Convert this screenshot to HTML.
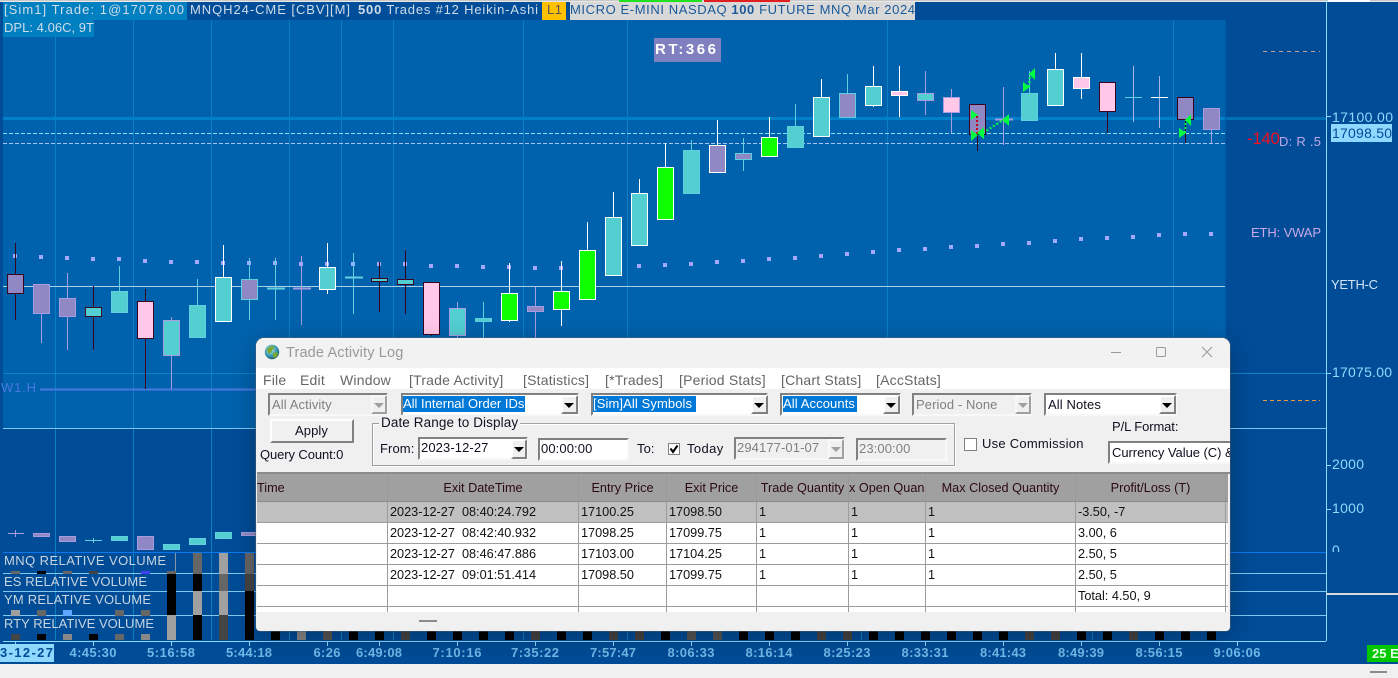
<!DOCTYPE html>
<html><head><meta charset="utf-8"><title>Trade Activity Log</title>
<style>
html,body{margin:0;padding:0;width:1398px;height:678px;overflow:hidden;background:#f0f0f0}
body{position:relative;font-family:"Liberation Sans",sans-serif}
#c{position:absolute;left:0;top:0}
#c text{font-family:"Liberation Sans",sans-serif;font-size:13px}
.pd{fill:#9088c4;stroke:#3a0020}.pp{fill:#9088c4;stroke:#a89ce0}.pt{fill:#9088c4;stroke:#60d0e0}.pw{fill:#9088c4;stroke:#fff}
.td{fill:#53cfd2;stroke:#3a0020}.tt{fill:#53cfd2;stroke:#60d0e0}.tp{fill:#53cfd2;stroke:#a89ce0}.tw{fill:#53cfd2;stroke:#fff}
.kd{fill:#ffc8e8;stroke:#3a0020}.kp{fill:#ffc8e8;stroke:#a89ce0}.kw{fill:#ffc8e8;stroke:#fff}
.gw{fill:#10ff00;stroke:#fff}
.ax{fill:#8fd8ff}.xl{fill:#70b8e8;font-weight:bold;text-anchor:middle}
.rl{fill:#c8d4e0}
#wo{position:absolute;left:256px;top:338px;width:974px;height:293px;border-radius:8px 8px 4px 4px;overflow:hidden;background:#f0f0f0;box-shadow:0 6px 26px rgba(0,0,0,.28),0 0 0 1px rgba(90,110,130,.5)}
#w{position:absolute;left:-256px;top:-338px;width:1398px;height:678px}
#w div,#w span{position:absolute;box-sizing:border-box}
.t{white-space:pre;line-height:16px;height:16px;font-size:14px;color:#101020}
.m{color:#666;top:372px;font-size:14px;letter-spacing:.2px}
.cb{height:23px;top:393px;background:#fff;border:2px solid;border-color:#808080 #f8f8f8 #f8f8f8 #808080}
.cb.d{background:#f0f0f0}
.btn{background:#f0f0f0;border:2px solid;border-color:#fff #808080 #808080 #fff}
.ar{width:0;height:0;border-left:5px solid transparent;border-right:5px solid transparent;border-top:5px solid #000}
.ar.g{border-top-color:#a0a0a0}
.sel{background:#0078d7;color:#fff}
.tb{font-size:13px;letter-spacing:.1px}
table{border-collapse:collapse;table-layout:fixed;font-size:12.7px;color:#111;background:#fff}
td{border:1px solid #9c9c9c;padding:0 0 0 2px;height:20px;line-height:20px;white-space:pre;overflow:hidden}
tr.h td{background:#a0a0a0;height:26px;line-height:26px;text-align:center;color:#2a0a10;border-color:#a0a0a0 #9a9a9a #8c8c8c #9a9a9a;padding:0}
tr.s td{background:#c0c0c0}
</style></head><body>
<svg id="c" width="1398" height="678" viewBox="0 0 1398 678" xmlns="http://www.w3.org/2000/svg" shape-rendering="crispEdges">
<rect width="1398" height="678" fill="#f0f0f0"/>
<rect y="2" width="1398" height="662" fill="#004c97"/>
<rect x="3" y="20" width="1222" height="408" fill="#0062ad"/>
<rect x="0" y="0" width="1398" height="1" fill="#c8c8c8"/>
<rect x="0" y="1" width="1398" height="1" fill="#e8e8e8"/>
<rect x="619" y="0" width="83" height="2" fill="#20e020"/><rect x="704" y="0" width="86" height="2" fill="#e02020"/>
<rect x="1328" y="0" width="42" height="2" fill="#fff"/>
<!-- vertical grid -->
<g stroke="#0a7fc4" fill="none"><path d="M55.5 37V640M133.5 20V640M211.5 20V640M289.5 20V640M341.5 20V640M393.5 20V640M523.5 20V640M627.5 20V640M887.5 20V428M1173.5 20V428M861.5 630V640M1092.5 630V640"/></g>
<path d="M1326.5 0V641" stroke="#8fd8ff"/>
<!-- horizontals -->
<rect x="3" y="117" width="1222" height="3" fill="#0080c8"/><rect x="1225" y="117" width="101" height="3" fill="#0070b4"/>
<path d="M3 133.5H1225" stroke="#8fd8ff" stroke-dasharray="4 2"/>
<path d="M3 143.5H1225" stroke="#a8c4f4" stroke-dasharray="4 2"/>
<path d="M3 286.5H1225" stroke="#a8d0e4"/>
<path d="M3 373.5H1326" stroke="#0a84c8"/>
<path d="M3 428.5H1326" stroke="#80c8f0"/>
<path d="M40 389.5H300" stroke="#4a78e0" stroke-width="2"/>
<path d="M1263 51.5H1320" stroke="#c0a090" stroke-dasharray="4 4"/>
<path d="M1263 400.5H1320" stroke="#e89a40" stroke-dasharray="4 3"/>
<!-- dots -->
<g fill="#a4a8ff"><rect x="13" y="254" width="4" height="4"/><rect x="39" y="255" width="4" height="4"/><rect x="65" y="256" width="4" height="4"/><rect x="91" y="257" width="4" height="4"/><rect x="117" y="257" width="4" height="4"/><rect x="143" y="259" width="4" height="4"/><rect x="169" y="260" width="4" height="4"/><rect x="195" y="260" width="4" height="4"/><rect x="221" y="261" width="4" height="4"/><rect x="247" y="261" width="4" height="4"/><rect x="273" y="261" width="4" height="4"/><rect x="299" y="262" width="4" height="4"/><rect x="325" y="262" width="4" height="4"/><rect x="351" y="262" width="4" height="4"/><rect x="377" y="262" width="4" height="4"/><rect x="403" y="262" width="4" height="4"/><rect x="429" y="264" width="4" height="4"/><rect x="455" y="264" width="4" height="4"/><rect x="481" y="265" width="4" height="4"/><rect x="507" y="265" width="4" height="4"/><rect x="533" y="266" width="4" height="4"/><rect x="559" y="266" width="4" height="4"/><rect x="637" y="264" width="4" height="4"/><rect x="663" y="263" width="4" height="4"/><rect x="689" y="262" width="4" height="4"/><rect x="715" y="260" width="4" height="4"/><rect x="741" y="259" width="4" height="4"/><rect x="767" y="257" width="4" height="4"/><rect x="793" y="256" width="4" height="4"/><rect x="819" y="254" width="4" height="4"/><rect x="845" y="252" width="4" height="4"/><rect x="871" y="250" width="4" height="4"/><rect x="897" y="248" width="4" height="4"/><rect x="923" y="247" width="4" height="4"/><rect x="949" y="245" width="4" height="4"/><rect x="975" y="244" width="4" height="4"/><rect x="1001" y="242" width="4" height="4"/><rect x="1027" y="241" width="4" height="4"/><rect x="1053" y="239" width="4" height="4"/><rect x="1079" y="237" width="4" height="4"/><rect x="1105" y="236" width="4" height="4"/><rect x="1131" y="235" width="4" height="4"/><rect x="1157" y="233" width="4" height="4"/><rect x="1183" y="232" width="4" height="4"/><rect x="1209" y="232" width="4" height="4"/></g>
<!-- candles -->
<g class="pd"><path d="M15.5 243V320"/><rect x="7.5" y="274.5" width="16" height="19"/></g>
<g class="pp"><path d="M41.5 314V343"/><rect x="33.5" y="284.5" width="16" height="29"/></g>
<g class="pp"><path d="M67.5 273V350"/><rect x="59.5" y="298.5" width="16" height="18"/></g>
<g class="td"><path d="M93.5 286V350"/><rect x="85.5" y="307.5" width="16" height="9"/></g>
<g class="tt"><path d="M119.5 266V313"/><rect x="111.5" y="291.5" width="16" height="21"/></g>
<g class="kd"><path d="M145.5 289V389"/><rect x="137.5" y="301.5" width="16" height="37"/></g>
<g class="tp"><path d="M171.5 317V389"/><rect x="163.5" y="320.5" width="16" height="35"/></g>
<g class="tt"><path d="M197.5 279V338"/><rect x="189.5" y="305.5" width="16" height="32"/></g>
<g class="tw"><path d="M223.5 245V322"/><rect x="215.5" y="277.5" width="16" height="44"/></g>
<g class="pt"><path d="M249.5 258V320"/><rect x="241.5" y="279.5" width="16" height="20"/></g>
<g class="tt"><path d="M275.5 258V320"/><rect x="267.5" y="288" width="17" height="1"/></g>
<g class="pp"><path d="M301.5 256V325"/><rect x="293.5" y="288" width="17" height="1"/></g>
<g class="tw"><path d="M327.5 243V294"/><rect x="319.5" y="267.5" width="16" height="22"/></g>
<g class="tt"><path d="M353.5 253V314"/><rect x="345.5" y="277" width="17" height="1"/></g>
<g class="td"><path d="M379.5 262V312"/><rect x="371.5" y="278.5" width="16" height="3"/></g>
<g class="td"><path d="M405.5 250V314"/><rect x="397.5" y="279.5" width="16" height="5"/></g>
<g class="kd"><path d="M431.5 282V336"/><rect x="423.5" y="282.5" width="16" height="52"/></g>
<g class="tp"><path d="M457.5 302V340"/><rect x="449.5" y="308.5" width="16" height="27"/></g>
<g class="tt"><path d="M483.5 302V340"/><rect x="475.5" y="318.5" width="16" height="3"/></g>
<g class="gw"><path d="M509.5 263V322"/><rect x="501.5" y="293.5" width="16" height="27"/></g>
<g class="pp"><path d="M535.5 287V340"/><rect x="527.5" y="306.5" width="16" height="5"/></g>
<g class="gw"><path d="M561.5 261V326"/><rect x="553.5" y="291.5" width="16" height="18"/></g>
<g class="gw"><path d="M587.5 222V299"/><rect x="579.5" y="250.5" width="16" height="49"/></g>
<g class="tw"><path d="M613.5 192V276"/><rect x="605.5" y="217.5" width="16" height="58"/></g>
<g class="tw"><path d="M639.5 179V245"/><rect x="631.5" y="193.5" width="16" height="52"/></g>
<g class="gw"><path d="M665.5 143V219"/><rect x="657.5" y="167.5" width="16" height="52"/></g>
<g class="tt"><path d="M691.5 140V193"/><rect x="683.5" y="150.5" width="16" height="43"/></g>
<g class="pw"><path d="M717.5 120V172"/><rect x="709.5" y="145.5" width="16" height="27"/></g>
<g class="pt"><path d="M743.5 138V171"/><rect x="735.5" y="153.5" width="16" height="6"/></g>
<g class="gw"><path d="M769.5 117V156"/><rect x="761.5" y="137.5" width="16" height="19"/></g>
<g class="tt"><path d="M795.5 104V147"/><rect x="787.5" y="126.5" width="16" height="21"/></g>
<g class="tw"><path d="M821.5 79V136"/><rect x="813.5" y="97.5" width="16" height="39"/></g>
<g class="pt"><path d="M847.5 74V118"/><rect x="839.5" y="93.5" width="16" height="24"/></g>
<g class="tw"><path d="M873.5 66V107"/><rect x="865.5" y="86.5" width="16" height="19"/></g>
<g class="kw"><path d="M899.5 66V117"/><rect x="891.5" y="91.5" width="16" height="4"/></g>
<g class="tp"><path d="M925.5 71V115"/><rect x="917.5" y="93.5" width="16" height="7"/></g>
<g class="kp"><path d="M951.5 89V133"/><rect x="943.5" y="97.5" width="16" height="15"/></g>
<g class="pd"><path d="M977.5 104V151"/><rect x="969.5" y="104.5" width="16" height="30"/></g>
<g class="pp"><path d="M1003.5 87V145"/><rect x="995.5" y="119" width="17" height="1"/></g>
<g class="tt"><path d="M1029.5 71V93"/><rect x="1021.5" y="93.5" width="16" height="27"/></g>
<g class="tw"><path d="M1055.5 53V106"/><rect x="1047.5" y="69.5" width="16" height="36"/></g>
<g class="kw"><path d="M1081.5 53V99"/><rect x="1073.5" y="77.5" width="16" height="11"/></g>
<g class="kd"><path d="M1107.5 82V133"/><rect x="1099.5" y="82.5" width="16" height="29"/></g>
<path d="M1133.5 66V122" stroke="#a8b4e8"/><rect x="1125" y="97" width="17" height="1" fill="#60d0e0"/>
<path d="M1159.5 76V128" stroke="#a8b4e8"/><rect x="1151" y="97" width="17" height="1" fill="#fff"/>
<g class="pd"><path d="M1185.5 97V143"/><rect x="1177.5" y="97.5" width="16" height="22"/></g>
<g class="pp"><path d="M1211.5 108V143"/><rect x="1203.5" y="108.5" width="16" height="21"/></g>
<!-- trades -->
<path d="M977 116V135" stroke="#c00010" stroke-width="2" stroke-dasharray="2 2"/>
<g stroke="#00ff40" stroke-width="2" stroke-dasharray="2 2" fill="none"><path d="M983 133L1003 120"/><path d="M1029 87L1030 75"/><path d="M1185 133L1186 120"/></g>
<g fill="#00ff40" shape-rendering="auto"><path d="M971 110L978 115L971 120Z"/><path d="M971 130L978 135L971 141Z"/><path d="M984 127L977 133L984 139Z"/><path d="M1009 114L1002 120L1009 126Z"/><path d="M1023 82L1030 87L1023 92Z"/><path d="M1035 68L1029 74L1035 80Z"/><path d="M1179 128L1186 133L1179 138Z"/><path d="M1191 114L1185 120L1191 126Z"/></g>
<!-- volume pane -->
<g fill="#9088c4" stroke="#a89ce0"><path d="M15.5 530V537M8 533.5H24" fill="none"/><rect x="33.5" y="533.5" width="16" height="3"/><rect x="59.5" y="536.5" width="16" height="5"/><rect x="137.5" y="536.5" width="16" height="13"/><rect x="241.5" y="532.5" width="16" height="3"/></g>
<g fill="#53cfd2" stroke="#60d0e0"><path d="M93.5 538V543M85 540.5H102" fill="none"/><rect x="111.5" y="536.5" width="16" height="4"/><rect x="163.5" y="544.5" width="16" height="5"/><rect x="189.5" y="538.5" width="16" height="6"/><rect x="215.5" y="532.5" width="16" height="6"/></g>
<path d="M0 552.5H1326" stroke="#0a78f0"/>
<path d="M0 573.5H1326M0 591.5H1326M0 615.5H1326" stroke="#80c8f0"/>
<path d="M175.5 553V573" stroke="#8a96a8"/>
<!-- rel bars -->
<g fill="#666"><rect x="11" y="571" width="9" height="3"/><rect x="63" y="571" width="9" height="3"/><rect x="167" y="571" width="9" height="3"/><rect x="193" y="553" width="9" height="21"/><rect x="245" y="553" width="9" height="21"/><rect x="219" y="574" width="9" height="17"/><rect x="37" y="610" width="9" height="6"/><rect x="115" y="610" width="9" height="6"/><rect x="141" y="610" width="9" height="6"/><rect x="115" y="634" width="9" height="6"/></g>
<g fill="#444"><rect x="89" y="571" width="9" height="3"/><rect x="245" y="574" width="9" height="17"/><rect x="219" y="615" width="9" height="25"/><rect x="11" y="634" width="9" height="6"/></g>
<g fill="#000"><rect x="37" y="571" width="9" height="3"/><rect x="167" y="574" width="9" height="41"/><rect x="193" y="574" width="9" height="17"/><rect x="245" y="591" width="9" height="49"/><rect x="193" y="615" width="9" height="25"/><rect x="37" y="634" width="9" height="6"/><rect x="89" y="634" width="9" height="6"/></g>
<g fill="#a0a0a0"><rect x="219" y="553" width="9" height="21"/><rect x="193" y="591" width="9" height="24"/><rect x="219" y="591" width="9" height="24"/><rect x="167" y="615" width="9" height="25"/><rect x="11" y="610" width="9" height="6"/></g>
<rect x="141" y="571" width="9" height="3" fill="#4040f0"/><rect x="63" y="610" width="9" height="6" fill="#60a8ff"/>
<g fill="#888"><rect x="63" y="634" width="9" height="6"/><rect x="141" y="634" width="9" height="6"/></g>
<!-- strip under window -->
<g fill="#000"><rect x="271" y="631" width="9" height="9"/><rect x="349" y="631" width="9" height="9"/><rect x="375" y="631" width="9" height="9"/><rect x="427" y="631" width="9" height="9"/><rect x="453" y="631" width="9" height="9"/><rect x="479" y="631" width="9" height="9"/><rect x="505" y="631" width="9" height="9"/><rect x="557" y="631" width="9" height="9"/><rect x="583" y="631" width="9" height="9"/><rect x="661" y="631" width="9" height="9"/><rect x="739" y="631" width="9" height="9"/><rect x="765" y="631" width="9" height="9"/><rect x="791" y="631" width="9" height="9"/><rect x="869" y="631" width="9" height="9"/><rect x="895" y="631" width="9" height="9"/><rect x="921" y="631" width="9" height="9"/><rect x="947" y="631" width="9" height="9"/><rect x="973" y="631" width="9" height="9"/><rect x="999" y="631" width="9" height="9"/><rect x="1077" y="631" width="9" height="9"/><rect x="1103" y="631" width="9" height="9"/><rect x="1155" y="631" width="9" height="9"/><rect x="1181" y="631" width="9" height="9"/><rect x="1207" y="631" width="9" height="9"/></g>
<g fill="#444"><rect x="401" y="631" width="9" height="9"/><rect x="531" y="631" width="9" height="9"/><rect x="609" y="631" width="9" height="9"/><rect x="635" y="631" width="9" height="9"/><rect x="817" y="631" width="9" height="9"/><rect x="843" y="631" width="9" height="9"/><rect x="1025" y="631" width="9" height="9"/><rect x="1051" y="631" width="9" height="9"/><rect x="1129" y="631" width="9" height="9"/></g>
<g fill="#555"><rect x="323" y="631" width="9" height="9"/><rect x="687" y="631" width="9" height="9"/><rect x="713" y="631" width="9" height="9"/></g>
<rect x="297" y="631" width="9" height="9" fill="#888"/>
<!-- bottom axis -->
<path d="M0 641.5H1326" stroke="#8fd8ff"/>
<path stroke="#8fd8ff" d="M15.5 642V646M93.5 642V646M171.5 642V646M249.5 642V646M327.5 642V646M379.5 642V646M457.5 642V646M535.5 642V646M613.5 642V646M691.5 642V646M769.5 642V646M847.5 642V646M925.5 642V646M1003.5 642V646M1081.5 642V646M1159.5 642V646M1237.5 642V646"/>
<path stroke="#8fd8ff" d="M1326 116.5H1331M1326 373.5H1331M1326 465.5H1331M1326 509.5H1331"/>
<rect x="1326" y="593" width="72" height="2" fill="#d8d8d8"/>
<rect x="1225" y="20" width="1" height="408" fill="#0058a4"/>
<rect x="0" y="2" width="3" height="662" fill="#004c97"/>
<g shape-rendering="auto">
<!-- header labels -->
<rect x="3" y="2" width="184" height="18" fill="#0080c0"/><rect x="3" y="20" width="91" height="17" fill="#0080c0"/>
<rect x="187" y="2" width="351" height="18" fill="#004d99"/>
<rect x="542" y="2" width="24" height="18" fill="#ffc000"/>
<rect x="570" y="2" width="345" height="18" fill="#d8d8d8"/>
<text x="4" y="14" fill="#d0dce8" textLength="180">[Sim1]  Trade: 1@17078.00</text>
<text x="4" y="32" fill="#d0dce8" textLength="90">DPL: 4.06C, 9T</text>
<text x="190" y="14" fill="#d0dce8" textLength="160">MNQH24-CME [CBV][M]</text>
<text x="358" y="14" fill="#d0dce8" textLength="180"><tspan font-weight="bold">500</tspan> Trades #12 Heikin-Ashi</text>
<text x="547" y="14" fill="#555" textLength="15">L1</text>
<text x="570" y="14" fill="#1a5a9a" textLength="345">MICRO E-MINI NASDAQ <tspan font-weight="bold">100</tspan> FUTURE MNQ Mar 2024</text>
<rect x="654" y="38" width="67" height="24" fill="#8080c0"/>
<text x="655" y="54" fill="#fff" style="font-size:15px;font-weight:bold" textLength="61">RT:366</text>
<text x="1247" y="144" fill="#f01020" style="font-size:17px" textLength="33">-140</text>
<text x="1279" y="146" fill="#c0a8e8" textLength="42">D: R .5</text>
<text x="1251" y="237" fill="#c8a8e8" textLength="70">ETH:  VWAP</text>
<text x="1331" y="289" fill="#d0e4f4" textLength="47">YETH-C</text>
<text x="1" y="392" fill="#4a78e0" textLength="35">W1.H</text>
<text class="ax" x="1332" y="122" style="font-size:14px" textLength="61">17100.00</text>
<rect x="1331" y="124" width="61" height="18" fill="#8fd8ff"/>
<text x="1332" y="138" fill="#004c97" style="font-size:14px" textLength="60">17098.50</text>
<text class="ax" x="1332" y="377" style="font-size:14px" textLength="60">17075.00</text>
<text class="ax" x="1332" y="469" style="font-size:14px" textLength="32">2000</text>
<text class="ax" x="1332" y="513" style="font-size:14px" textLength="32">1000</text>
<svg x="1326" y="540" width="40" height="12"><text class="ax" x="6" y="15" style="font-size:14px">0</text></svg>
<text class="rl" x="4" y="565" textLength="162">MNQ RELATIVE  VOLUME</text>
<text class="rl" x="4" y="586" textLength="143">ES RELATIVE  VOLUME</text>
<text class="rl" x="4" y="604" textLength="147">YM RELATIVE  VOLUME</text>
<text class="rl" x="4" y="628" textLength="150">RTY RELATIVE  VOLUME</text>
<rect x="0" y="644" width="54" height="18" fill="#8fd8ff"/>
<text x="0" y="657" fill="#004c97" style="font-weight:bold" textLength="53">3-12-27</text>
<text class="xl" x="93" y="657" textLength="47">4:45:30</text>
<text class="xl" x="171" y="657" textLength="48">5:16:58</text>
<text class="xl" x="249" y="657" textLength="46">5:44:18</text>
<text class="xl" x="327" y="657" textLength="27">6:26</text>
<text class="xl" x="379" y="657" textLength="46">6:49:08</text>
<text class="xl" x="457" y="657" textLength="49">7:10:16</text>
<text class="xl" x="535" y="657" textLength="48">7:35:22</text>
<text class="xl" x="613" y="657" textLength="46">7:57:47</text>
<text class="xl" x="691" y="657" textLength="47">8:06:33</text>
<text class="xl" x="769" y="657" textLength="47">8:16:14</text>
<text class="xl" x="847" y="657" textLength="47">8:25:23</text>
<text class="xl" x="925" y="657" textLength="47">8:33:31</text>
<text class="xl" x="1003" y="657" textLength="46">8:41:43</text>
<text class="xl" x="1081" y="657" textLength="46">8:49:39</text>
<text class="xl" x="1159" y="657" textLength="47">8:56:15</text>
<text class="xl" x="1237" y="657" textLength="47">9:06:06</text>
<rect x="1367" y="645" width="31" height="17" fill="#00c800"/>
<text x="1372" y="658" fill="#e8ffe8" style="font-weight:bold">25 E</text>
</g>
<rect x="1370" y="671" width="17" height="2" fill="#8c8c8c"/>
</svg>

<div id="wo"><div id="w">
<div style="left:256px;top:338px;width:974px;height:30px;background:#f2f2f2"></div>
<svg style="position:absolute;left:264px;top:344px" width="16" height="16" viewBox="0 0 16 16"><defs><radialGradient id="gl" cx=".4" cy=".35" r=".7"><stop offset="0" stop-color="#b8e8f0"/><stop offset=".6" stop-color="#3a98b0"/><stop offset="1" stop-color="#1a5a70"/></radialGradient></defs><circle cx="8" cy="8" r="7.2" fill="url(#gl)"/><path d="M3 5Q6 1.5 10 2.5Q11 5 8 6Q8 9 5 9.5Q3 8 3 5ZM9 9Q12.5 7.5 14 9.5Q13 13 10 14Q8.5 11.5 9 9Z" fill="#7aa830"/></svg>
<span class="t" style="left:286px;top:345px;color:#999;font-size:14.5px;letter-spacing:.15px">Trade Activity Log</span>
<svg style="position:absolute;left:1100px;top:340px" width="125" height="25" fill="none" stroke="#999"><path d="M11 12.5H21"/><rect x="56.5" y="7.5" width="9" height="9" rx="1"/><path d="M102 7L112 17M112 7L102 17"/></svg>
<div style="left:256px;top:368px;width:974px;height:21px;background:#fff"></div>
<span class="t m" style="left:263px">File</span><span class="t m" style="left:300px">Edit</span><span class="t m" style="left:340px">Window</span><span class="t m" style="left:409px">[Trade Activity]</span><span class="t m" style="left:523px">[Statistics]</span><span class="t m" style="left:605px">[*Trades]</span><span class="t m" style="left:679px">[Period Stats]</span><span class="t m" style="left:781px">[Chart Stats]</span><span class="t m" style="left:876px">[AccStats]</span>

<div class="cb d" style="left:268px;width:120px"></div>
<span class="t tb" style="left:272px;top:397px;color:#808080">All Activity</span>
<div class="btn" style="left:371px;top:395px;width:16px;height:19px;border-color:#f8f8f8 #a0a0a0 #a0a0a0 #f8f8f8"></div><div class="ar g" style="left:374px;top:403px"></div>

<div class="cb" style="left:401px;width:178px"></div>
<span class="t tb sel" style="left:403px;top:396px;width:122px;letter-spacing:0">All Internal Order IDs</span>
<div class="btn" style="left:561px;top:395px;width:17px;height:19px"></div><div class="ar" style="left:564px;top:403px"></div>

<div class="cb" style="left:591px;width:177px"></div>
<span class="t tb sel" style="left:593px;top:396px;width:103px">[Sim]All Symbols</span>
<div class="btn" style="left:751px;top:395px;width:17px;height:19px"></div><div class="ar" style="left:754px;top:403px"></div>

<div class="cb" style="left:780px;width:121px"></div>
<span class="t tb sel" style="left:783px;top:396px;width:74px">All Accounts</span>
<div class="btn" style="left:883px;top:395px;width:17px;height:19px"></div><div class="ar" style="left:886px;top:403px"></div>

<div class="cb d" style="left:912px;width:120px"></div>
<span class="t tb" style="left:916px;top:397px;color:#808080">Period - None</span>
<div class="btn" style="left:1015px;top:395px;width:16px;height:19px;border-color:#f8f8f8 #a0a0a0 #a0a0a0 #f8f8f8"></div><div class="ar g" style="left:1018px;top:403px"></div>

<div class="cb" style="left:1044px;width:133px"></div>
<span class="t tb" style="left:1048px;top:397px">All Notes</span>
<div class="btn" style="left:1159px;top:395px;width:17px;height:19px"></div><div class="ar" style="left:1162px;top:403px"></div>

<div class="btn" style="left:270px;top:419px;width:84px;height:24px"></div>
<span class="t tb" style="left:295px;top:423px">Apply</span>
<span class="t tb" style="left:260px;top:447px;font-size:13px;letter-spacing:-.1px">Query Count:0</span>

<div style="left:372px;top:423px;width:583px;height:43px;border:1px solid #a0a0a0;box-shadow:inset 1px 1px 0 #fff,1px 1px 0 #fff"></div>
<span class="t tb" style="left:379px;top:415px;background:#f0f0f0;padding:0 2px;font-size:13.5px">Date Range to Display</span>
<span class="t tb" style="left:380px;top:441px">From:</span>
<div class="cb" style="left:418px;top:437px;width:110px"></div>
<span class="t tb" style="left:421px;top:440px">2023-12-27</span>
<div class="btn" style="left:511px;top:439px;width:16px;height:20px"></div><div class="ar" style="left:514px;top:447px"></div>
<div class="cb" style="left:538px;top:438px;width:91px"></div>
<span class="t tb" style="left:541px;top:441px">00:00:00</span>
<span class="t tb" style="left:637px;top:441px">To:</span>
<div style="left:668px;top:443px;width:12px;height:12px;background:#fff;border:1px solid #808080"></div>
<svg style="position:absolute;left:668px;top:443px" width="12" height="12"><path d="M2.5 5.5L5 9L9.5 2.5" fill="none" stroke="#000" stroke-width="2"/></svg>
<span class="t tb" style="left:687px;top:441px;letter-spacing:.4px">Today</span>
<div class="cb d" style="left:734px;top:437px;width:111px"></div>
<span class="t tb" style="left:737px;top:440px;color:#808080">294177-01-07</span>
<div class="btn" style="left:828px;top:439px;width:16px;height:20px;border-color:#f8f8f8 #a0a0a0 #a0a0a0 #f8f8f8"></div><div class="ar g" style="left:831px;top:447px"></div>
<div class="cb d" style="left:856px;top:438px;width:91px"></div>
<span class="t tb" style="left:859px;top:441px;color:#808080">23:00:00</span>
<div style="left:964px;top:438px;width:13px;height:13px;background:#fff;border:1px solid #808080"></div>
<span class="t tb" style="left:982px;top:436px;letter-spacing:.25px">Use Commission</span>
<span class="t tb" style="left:1112px;top:419px;letter-spacing:-.1px">P/L Format:</span>
<div class="cb" style="left:1108px;top:441px;width:130px"></div>
<span class="t tb" style="left:1112px;top:445px;letter-spacing:-.05px">Currency Value (C) &amp;</span>

<div style="left:257px;top:470px;width:973px;height:4px;background:#f0f0f0;border-bottom:2px solid #8c8c8c"></div>
<div style="left:257px;top:474px;width:971px;height:138px;overflow:hidden;background:#fff">
<table style="position:absolute;left:-1px;top:0;width:1000px"><colgroup><col style="width:131px"><col style="width:191px"><col style="width:88px"><col style="width:90px"><col style="width:92px"><col style="width:77px"><col style="width:150px"><col style="width:150px"><col style="width:31px"></colgroup>
<tr class="h"><td style="text-align:left">Time</td><td>Exit DateTime</td><td>Entry Price</td><td>Exit Price</td><td>Trade Quantity</td><td style="text-align:left">x Open Quan</td><td>Max Closed Quantity</td><td>Profit/Loss (T)</td><td></td></tr>
<tr class="s"><td></td><td>2023-12-27  08:40:24.792</td><td>17100.25</td><td>17098.50</td><td>1</td><td>1</td><td>1</td><td>-3.50, -7</td><td></td></tr>
<tr><td></td><td>2023-12-27  08:42:40.932</td><td>17098.25</td><td>17099.75</td><td>1</td><td>1</td><td>1</td><td>3.00, 6</td><td></td></tr>
<tr><td></td><td>2023-12-27  08:46:47.886</td><td>17103.00</td><td>17104.25</td><td>1</td><td>1</td><td>1</td><td>2.50, 5</td><td></td></tr>
<tr><td></td><td>2023-12-27  09:01:51.414</td><td>17098.50</td><td>17099.75</td><td>1</td><td>1</td><td>1</td><td>2.50, 5</td><td></td></tr>
<tr><td></td><td></td><td></td><td></td><td></td><td></td><td></td><td>Total: 4.50, 9</td><td></td></tr>
<tr><td></td><td></td><td></td><td></td><td></td><td></td><td></td><td></td><td></td></tr>
</table></div>
<div style="left:419px;top:620px;width:18px;height:2px;background:#8c8c8c"></div>
</div></div>
</body></html>
